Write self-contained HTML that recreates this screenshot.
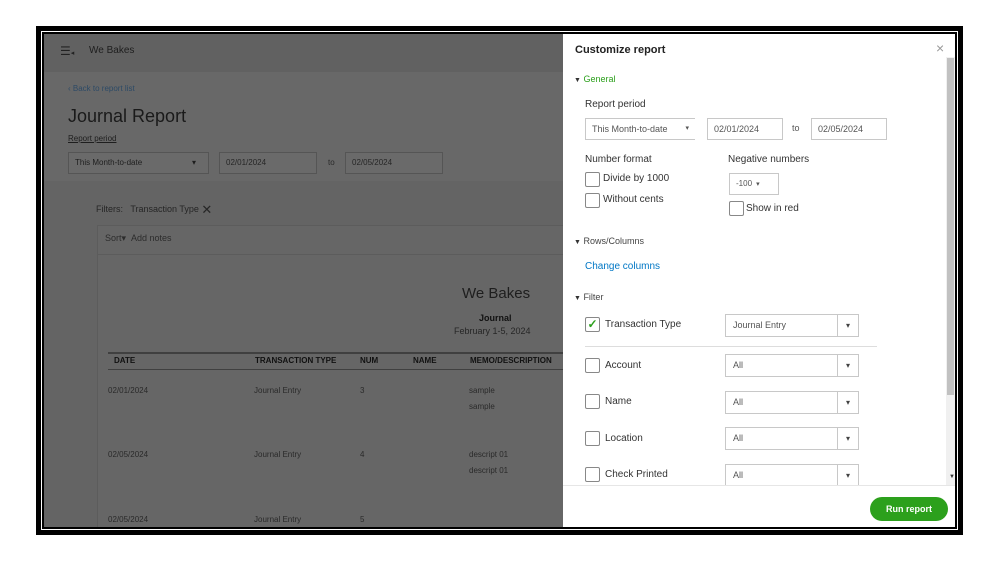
<!DOCTYPE html>
<html><head><meta charset="utf-8"><style>
*{margin:0;padding:0;box-sizing:border-box}
body{width:999px;height:562px;background:#fff;font-family:"Liberation Sans",sans-serif;position:relative;overflow:hidden}
.outer{position:absolute;left:36px;top:26px;width:927px;height:509px;background:#000}
.wline{position:absolute;left:41px;top:31px;width:917px;height:499px;border:1.5px solid #fff}
.app{position:absolute;left:44px;top:34px;width:911px;height:493px;background:#686868;overflow:hidden}
.a{position:absolute;white-space:nowrap}
.box{position:absolute;border:1px solid #555;background:#6a6a6a}
.panel{position:absolute;left:519px;top:0;width:392px;height:493px;background:#fff;color:#333}
.cb{position:absolute;width:15px;height:15px;border:1px solid #888;border-radius:2px;background:#fff}
.sel{position:absolute;border:1px solid #c8c8c8;height:23px;font-size:9px;color:#555;padding:0 7px;line-height:21px;background:#fff}
.sel .c{position:absolute;right:0;top:0;width:21px;height:21px;border-left:1px solid #c8c8c8;text-align:center;line-height:21px;font-size:8px;color:#444;padding:0}
.in{position:absolute;border:1px solid #c8c8c8;height:22px;font-size:9px;color:#555;padding:0 6px;line-height:20px}
.lbl{font-size:10px;color:#333}
</style></head><body>
<div class="outer"></div><div class="wline"></div>
<div class="app">
 <div style="position:absolute;left:0;top:0;width:519px;height:38px;background:#616161"></div>
 <div class="a" style="left:16px;top:10px;font-size:12px;color:#222">☰<span style="font-size:7px">◂</span></div>
 <div class="a" style="left:45px;top:11px;font-size:10px;color:#1e1e1e">We Bakes</div>
 <div class="a" style="left:24px;top:50px;font-size:8px;color:#2d4a66">‹ Back to report list</div>
 <div class="a" style="left:24px;top:72px;font-size:18px;color:#1a1a1a">Journal Report</div>
 <div class="a" style="left:24px;top:100px;font-size:8px;color:#1e1e1e;text-decoration:underline">Report period</div>
 <div class="box" style="left:24px;top:118px;width:141px;height:22px;font-size:8px;color:#1e1e1e;padding:0 6px;line-height:20px">This Month-to-date<span style="position:absolute;right:12px">▾</span></div>
 <div class="box" style="left:175px;top:118px;width:98px;height:22px;font-size:8px;color:#262626;padding:0 6px;line-height:20px">02/01/2024</div>
 <div class="a" style="left:284px;top:124px;font-size:8px;color:#2a2a2a">to</div>
 <div class="box" style="left:301px;top:118px;width:98px;height:22px;font-size:8px;color:#262626;padding:0 6px;line-height:20px">02/05/2024</div>
 <div style="position:absolute;left:0;top:147px;width:519px;height:346px;background:#646464"></div>
 <div class="a" style="left:52px;top:168px;font-size:9px;color:#262626">Filters: &nbsp; Transaction Type <span style="font-size:13px;vertical-align:-2px">✕</span></div>
 <div style="position:absolute;left:53px;top:191px;width:480px;height:310px;border:1px solid #5c5c5c;background:#666"></div>
 <div style="position:absolute;left:53px;top:220px;width:480px;height:1px;background:#5c5c5c"></div>
 <div class="a" style="left:61px;top:199px;font-size:9px;color:#2c2c2c">Sort▾ &nbsp;Add notes</div>
 <div class="a" style="left:418px;top:251px;font-size:15px;color:#1e1e1e">We Bakes</div>
 <div class="a" style="left:435px;top:279px;font-size:9px;color:#111;font-weight:bold">Journal</div>
 <div class="a" style="left:410px;top:292px;font-size:9px;color:#262626">February 1-5, 2024</div>
 <div style="position:absolute;left:64px;top:318px;width:460px;height:1.5px;background:#404040"></div>
 <div style="position:absolute;left:64px;top:335px;width:460px;height:1px;background:#404040"></div>
 <div class="a" style="left:70px;top:322px;font-size:8px;font-weight:bold;color:#111">DATE</div>
 <div class="a" style="left:211px;top:322px;font-size:8px;font-weight:bold;color:#111">TRANSACTION TYPE</div>
 <div class="a" style="left:316px;top:322px;font-size:8px;font-weight:bold;color:#111">NUM</div>
 <div class="a" style="left:369px;top:322px;font-size:8px;font-weight:bold;color:#111">NAME</div>
 <div class="a" style="left:426px;top:322px;font-size:8px;font-weight:bold;color:#111">MEMO/DESCRIPTION</div>
 <div style="font-size:8px;color:#2a2a2a">
  <div class="a" style="left:64px;top:352px">02/01/2024</div><div class="a" style="left:210px;top:352px">Journal Entry</div><div class="a" style="left:316px;top:352px">3</div><div class="a" style="left:425px;top:352px">sample</div><div class="a" style="left:425px;top:368px">sample</div>
  <div class="a" style="left:64px;top:416px">02/05/2024</div><div class="a" style="left:210px;top:416px">Journal Entry</div><div class="a" style="left:316px;top:416px">4</div><div class="a" style="left:425px;top:416px">descript 01</div><div class="a" style="left:425px;top:432px">descript 01</div>
  <div class="a" style="left:64px;top:481px">02/05/2024</div><div class="a" style="left:210px;top:481px">Journal Entry</div><div class="a" style="left:316px;top:481px">5</div>
 </div>
 <div class="panel">
  <div class="a" style="left:12px;top:10px;font-size:11px;font-weight:bold;color:#222">Customize report</div>
  <div class="a" style="left:373px;top:6px;font-size:14px;color:#999">×</div>
  <div style="position:absolute;left:383px;top:23px;width:9px;height:430px;background:#f0f0f0"></div>
  <div style="position:absolute;left:384px;top:24px;width:7px;height:337px;background:#c1c1c1"></div>
  <div class="a" style="left:11px;top:40px;font-size:9px;color:#2ca01c"><span style="color:#333;font-size:7px">▼</span> General</div>
  <div class="a lbl" style="left:22px;top:65px">Report period</div>
  <div class="in" style="left:22px;top:84px;width:110px;border-right:none">This Month-to-date<span style="position:absolute;right:6px;font-size:7px">▾</span></div>
  <div class="in" style="left:144px;top:84px;width:76px">02/01/2024</div>
  <div class="a" style="left:229px;top:89px;font-size:9px;color:#555">to</div>
  <div class="in" style="left:248px;top:84px;width:76px">02/05/2024</div>
  <div class="a lbl" style="left:22px;top:120px">Number format</div>
  <div class="a lbl" style="left:165px;top:120px">Negative numbers</div>
  <div class="cb" style="left:22px;top:138px"></div><div class="a lbl" style="left:40px;top:139px">Divide by 1000</div>
  <div class="cb" style="left:22px;top:159px"></div><div class="a lbl" style="left:40px;top:160px">Without cents</div>
  <div class="in" style="left:166px;top:139px;width:50px;font-size:8px">-100 <span style="font-size:7px">&nbsp;▾</span></div>
  <div class="cb" style="left:166px;top:167px"></div><div class="a lbl" style="left:183px;top:169px">Show in red</div>
  <div class="a" style="left:11px;top:202px;font-size:9px;color:#444"><span style="color:#333;font-size:7px">▼</span> Rows/Columns</div>
  <div class="a" style="left:22px;top:227px;font-size:10px;color:#0077c5">Change columns</div>
  <div class="a" style="left:11px;top:258px;font-size:9px;color:#444"><span style="color:#333;font-size:7px">▼</span> Filter</div>
  <div class="cb" style="left:22px;top:283px;color:#2ca01c;font-size:12px;line-height:13px;text-align:center;font-weight:bold">✓</div><div class="a lbl" style="left:42px;top:285px">Transaction Type</div>
  <div class="sel" style="left:162px;top:280px;width:134px">Journal Entry<span class="c">▾</span></div>
  <div style="position:absolute;left:22px;top:312px;width:292px;height:1px;background:#ddd"></div>
  <div class="cb" style="left:22px;top:324px"></div><div class="a lbl" style="left:42px;top:326px">Account</div>
  <div class="sel" style="left:162px;top:320px;width:134px">All<span class="c">▾</span></div>
  <div class="cb" style="left:22px;top:360px"></div><div class="a lbl" style="left:42px;top:362px">Name</div>
  <div class="sel" style="left:162px;top:357px;width:134px">All<span class="c">▾</span></div>
  <div class="cb" style="left:22px;top:397px"></div><div class="a lbl" style="left:42px;top:399px">Location</div>
  <div class="sel" style="left:162px;top:393px;width:134px">All<span class="c">▾</span></div>
  <div class="cb" style="left:22px;top:433px"></div><div class="a lbl" style="left:42px;top:435px">Check Printed</div>
  <div class="sel" style="left:162px;top:430px;width:134px;height:22px;border-bottom:none">All<span class="c">▾</span></div>
  <div style="position:absolute;left:0;top:451px;width:392px;height:42px;background:#fff;border-top:1px solid #e6e6e6"></div>
  <div class="a" style="left:386px;top:440px;font-size:6px;color:#333">▼</div>
  <div style="position:absolute;left:307px;top:463px;width:78px;height:24px;border-radius:12px;background:#2ca01c;color:#fff;font-size:9px;font-weight:bold;text-align:center;line-height:24px">Run report</div>
 </div>
</div>
</body></html>
